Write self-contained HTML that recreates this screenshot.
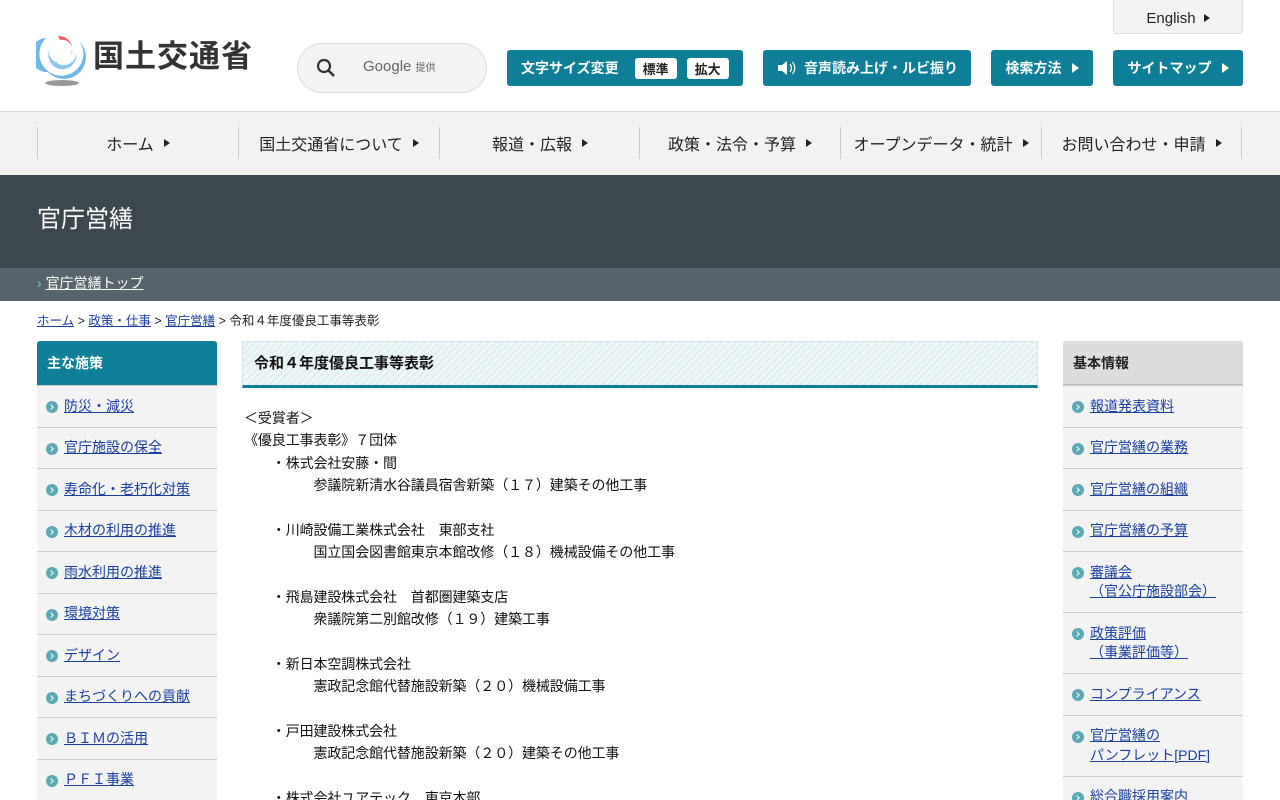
<!DOCTYPE html>
<html lang="ja"><head><meta charset="utf-8">
<style>
*{box-sizing:border-box;margin:0;padding:0}
html,body{width:1280px;height:800px;overflow:hidden}
body{background:#fff;font-family:"Liberation Sans","Noto Sans CJK JP",sans-serif;color:#222;position:relative}
a{color:#1a3fa0;text-decoration:underline}
.abs{position:absolute}
.btn{position:absolute;top:50px;height:36px;background:#0e7f96;color:#fff;border-radius:3px;font-size:14px;font-weight:bold;display:flex;align-items:center;justify-content:center}
.tri{display:inline-block;width:0;height:0;border-left:7px solid #fff;border-top:5px solid transparent;border-bottom:5px solid transparent;margin-left:10px}
.trid{display:inline-block;width:0;height:0;border-left:6px solid #222;border-top:4px solid transparent;border-bottom:4px solid transparent;margin-left:10px}
.nav{position:absolute;top:111px;left:0;width:1280px;height:64px;background:#f2f2f2;border-top:1px solid #ddd}
.nav div{position:absolute;top:15px;height:32px;border-left:1px solid #ccc;width:201px;display:flex;align-items:center;justify-content:center;font-size:16px;color:#222}
.side{position:absolute;top:341px;width:180px;background:#f3f3f3}
.side .h{height:44px;padding-left:10px;font-size:14px;font-weight:bold;display:flex;align-items:center;border-radius:3px 3px 0 0}
.side .i{border-top:1px solid #ccc;padding:10.5px 0 10.5px 27px;font-size:14px;line-height:19.5px;position:relative}
.side .i:before{content:"";position:absolute;left:9px;top:15px;width:12px;height:12px;border-radius:50%;background:#5aa9b5}
.side .i:after{content:"";position:absolute;left:12px;top:19px;width:3px;height:3px;border-right:1.5px solid #fff;border-top:1.5px solid #fff;transform:rotate(45deg)}
.content{position:absolute;left:244px;top:407px;font-size:14px;line-height:22.35px;white-space:pre;color:#111;letter-spacing:-0.1px}
</style></head><body>
<svg class="abs" style="left:36px;top:32px" width="52" height="56" viewBox="0 0 52 56">
<path d="M10 6 A22 22 0 1 0 44 10 A18 18 0 0 1 12 40 A17 17 0 0 1 10 6Z" fill="#6fb7e6"/>
<path d="M18 12 A14 14 0 1 0 40 20 A12 12 0 0 1 20 30 A10 10 0 0 1 18 12Z" fill="#8cc6ec"/>
<path d="M22 4 A13 13 0 0 1 34 24 A10 10 0 0 0 24 8 Z" fill="#e8606a"/>
<ellipse cx="26" cy="51" rx="17" ry="3" fill="#999"/>
</svg>
<div class="abs" style="left:93px;top:37px;font-size:31px;font-weight:bold;color:#333;letter-spacing:1px;line-height:40px">国土交通省</div>
<div class="abs" style="left:297px;top:43px;width:190px;height:50px;border:1px solid #ddd;border-radius:25px;background:#f3f3f3"></div>
<svg class="abs" style="left:316px;top:58px" width="20" height="20"><circle cx="8" cy="8" r="6" fill="none" stroke="#333" stroke-width="2.2"/><line x1="12.5" y1="12.5" x2="18" y2="18" stroke="#333" stroke-width="2.5"/></svg>
<div class="abs" style="left:363px;top:58px;font-size:15px;color:#666">Google <span style="font-size:10px">提供</span></div>
<div class="abs" style="left:1113px;top:-2px;width:130px;height:36px;background:#f3f3f3;border:1px solid #ddd;border-radius:0 0 3px 3px;display:flex;align-items:center;justify-content:center;font-size:15px;padding-top:4px">English<span class="trid" style="margin-left:8px"></span></div>
<div class="btn" style="left:507px;width:236px;justify-content:flex-start;padding-left:14px">文字サイズ変更<span style="background:#fff;color:#222;border-radius:3px;padding:1px 8px;margin-left:16px;font-size:13px">標準</span><span style="background:#fff;color:#222;border-radius:3px;padding:1px 8px;margin-left:10px;font-size:13px">拡大</span></div>
<div class="btn" style="left:763px;width:208px"><svg width="20" height="16" style="margin-right:8px"><path d="M2 5h4l5-4v14l-5-4H2z" fill="#fff"/><path d="M14 4q3 4 0 8M16.5 2q4.5 6 0 12" stroke="#fff" fill="none" stroke-width="1.2"/></svg>音声読み上げ・ルビ振り</div>
<div class="btn" style="left:991px;width:102px">検索方法<span class="tri"></span></div>
<div class="btn" style="left:1113px;width:130px">サイトマップ<span class="tri"></span></div>
<div class="nav">
<div style="left:37px">ホーム<span class="trid"></span></div>
<div style="left:238px">国土交通省について<span class="trid"></span></div>
<div style="left:439px">報道・広報<span class="trid"></span></div>
<div style="left:639px">政策・法令・予算<span class="trid"></span></div>
<div style="left:840px">オープンデータ・統計<span class="trid"></span></div>
<div style="left:1041px;border-right:1px solid #ccc;width:201px">お問い合わせ・申請<span class="trid"></span></div>
</div>
<div class="abs" style="left:0;top:175px;width:1280px;height:93px;background:#3c474e"></div>
<div class="abs" style="left:37px;top:204px;font-size:24px;color:#fff;line-height:32px">官庁営繕</div>
<div class="abs" style="left:0;top:268px;width:1280px;height:33px;background:#58646b"></div>
<div class="abs" style="left:37px;top:273px;font-size:14px;color:#fff;line-height:20px"><span style="color:#7cc">›</span> <a style="color:#fff">官庁営繕トップ</a></div>
<div class="abs" style="left:37px;top:312px;font-size:12.5px;line-height:18px"><a>ホーム</a> &gt; <a>政策・仕事</a> &gt; <a>官庁営繕</a> &gt; 令和４年度優良工事等表彰</div>
<div class="side" style="left:37px">
<div class="h" style="background:#0e8199;color:#fff">主な施策</div>
<div class="i"><a>防災・減災</a></div>
<div class="i"><a>官庁施設の保全</a></div>
<div class="i"><a>寿命化・老朽化対策</a></div>
<div class="i"><a>木材の利用の推進</a></div>
<div class="i"><a>雨水利用の推進</a></div>
<div class="i"><a>環境対策</a></div>
<div class="i"><a>デザイン</a></div>
<div class="i"><a>まちづくりへの貢献</a></div>
<div class="i"><a>ＢＩＭの活用</a></div>
<div class="i"><a>ＰＦＩ事業</a></div>
</div>
<div class="abs" style="left:242px;top:341px;width:796px;height:47px;background:repeating-linear-gradient(135deg,#eef6f8 0 3px,#dfeef2 3px 5px);border:1px solid #cfe3e8;border-bottom:3px solid #0e7f96;font-size:15px;font-weight:bold;padding-left:11px;line-height:44px;color:#111">令和４年度優良工事等表彰</div>
<div class="content">＜受賞者＞
《優良工事表彰》７団体
　　・株式会社安藤・間
　　　　　参議院新清水谷議員宿舎新築（１７）建築その他工事

　　・川崎設備工業株式会社　東部支社
　　　　　国立国会図書館東京本館改修（１８）機械設備その他工事

　　・飛島建設株式会社　首都圏建築支店
　　　　　衆議院第二別館改修（１９）建築工事

　　・新日本空調株式会社
　　　　　憲政記念館代替施設新築（２０）機械設備工事

　　・戸田建設株式会社
　　　　　憲政記念館代替施設新築（２０）建築その他工事

　　・株式会社ユアテック　東京本部</div>
<div class="side" style="left:1063px">
<div class="h" style="background:#ddd;border-bottom:1px solid #bbb">基本情報</div>
<div class="i"><a>報道発表資料</a></div>
<div class="i"><a>官庁営繕の業務</a></div>
<div class="i"><a>官庁営繕の組織</a></div>
<div class="i"><a>官庁営繕の予算</a></div>
<div class="i"><a>審議会<br>（官公庁施設部会）</a></div>
<div class="i"><a>政策評価<br>（事業評価等）</a></div>
<div class="i"><a>コンプライアンス</a></div>
<div class="i"><a>官庁営繕の<br>パンフレット[PDF]</a></div>
<div class="i"><a>総合職採用案内</a></div>
</div>
</body></html>
